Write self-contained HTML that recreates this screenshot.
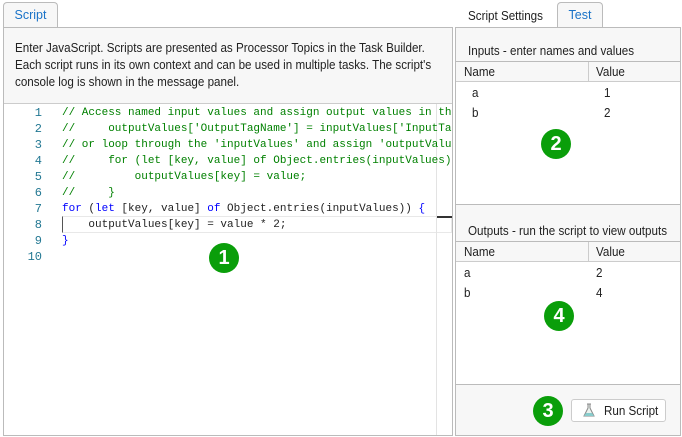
<!DOCTYPE html>
<html><head><style>
*{box-sizing:border-box;margin:0;padding:0}
body{width:682px;height:437px;background:#fff;font-family:"Liberation Sans",sans-serif;font-size:12px;color:#222;position:relative;overflow:hidden}
.a{position:absolute}
.tab{position:absolute;border:1px solid #bbb;border-bottom:none;border-radius:4px 4px 0 0;background:#f7f7f7;color:#1a73c8;font-size:12.5px;text-align:center;line-height:24px}
.code{font-family:"Liberation Mono",monospace;font-size:11px;line-height:16px;white-space:pre}
.c{color:#008000}.k{color:#0000ff}
.ln{position:absolute;left:0;width:38px;text-align:right;color:#237893;font-size:12px}
.circ{position:absolute;width:30px;height:30px;border-radius:50%;background:#0a9e0a;color:#fff;font-size:20px;font-weight:bold;line-height:30px;text-align:center}
.hd{position:absolute;font-size:12.5px;white-space:nowrap;transform:scaleX(.93);transform-origin:left top}
.desc div{white-space:nowrap;font-size:12.5px;line-height:17px;transform:scaleX(.93);transform-origin:left top}
</style></head><body>
<div class="tab" style="left:3px;top:2px;width:55px;height:26px;background:#f7f7f7">Script</div>
<div class="a" style="left:3px;top:27px;width:450px;height:409px;border:1px solid #bbb;background:#f7f7f7"></div>
<div class="a desc" style="left:15px;top:40px;color:#222">
<div>Enter JavaScript. Scripts are presented as Processor Topics in the Task Builder.</div>
<div>Each script runs in its own context and can be used in multiple tasks. The script's</div>
<div>console log is shown in the message panel.</div></div>
<div class="a" style="left:4px;top:103px;width:448px;height:332px;background:#fff;border-top:1px solid #ccc;overflow:hidden">
<div class="a" style="left:58px;top:112px;width:390px;height:17px;border:1px solid #e8e8e8;border-left:1px solid #555"></div>
<div class="a" style="left:432px;top:112px;width:16px;height:2px;background:#333"></div>
<div class="a" style="left:432px;top:0;width:1px;height:332px;background:#e3e3e3"></div>
<div class="a code" style="left:0;top:1px;width:100%">
<div class="ln" style="top:0">1</div><div class="ln" style="top:16px">2</div><div class="ln" style="top:32px">3</div><div class="ln" style="top:48px">4</div><div class="ln" style="top:64px">5</div><div class="ln" style="top:80px">6</div><div class="ln" style="top:96px">7</div><div class="ln" style="top:112px">8</div><div class="ln" style="top:128px">9</div><div class="ln" style="top:144px">10</div>
<div class="a" style="left:58px;top:0"><span class="c">// Access named input values and assign output values in th</span>
<span class="c">//     outputValues['OutputTagName'] = inputValues['InputTa</span>
<span class="c">// or loop through the 'inputValues' and assign 'outputValu</span>
<span class="c">//     for (let [key, value] of Object.entries(inputValues)</span>
<span class="c">//         outputValues[key] = value;</span>
<span class="c">//     }</span>
<span class="k">for</span> (<span class="k">let</span> [key, value] <span class="k">of</span> Object.entries(inputValues)) <span class="k">{</span>
    outputValues[key] = value * 2;
<span class="k">}</span>
</div></div>
</div>
<div class="circ" style="left:209px;top:243px">1</div>

<div class="hd" style="left:468px;top:9px">Script Settings</div>
<div class="tab" style="left:557px;top:2px;width:46px;height:26px">Test</div>
<div class="a" style="left:455px;top:27px;width:226px;height:409px;border:1px solid #bbb;background:#f7f7f7"></div>
<div class="hd" style="left:468px;top:44px">Inputs - enter names and values</div>
<div class="a" style="left:456px;top:61px;width:224px;height:144px;background:#fff;border-top:1px solid #bbb;border-bottom:1px solid #bbb"></div>
<div class="a" style="left:456px;top:62px;width:224px;height:20px;background:#f7f7f7;border-bottom:1px solid #ccc"></div>
<div class="a" style="left:588px;top:62px;width:1px;height:20px;background:#ccc"></div>
<div class="hd" style="left:464px;top:65px">Name</div><div class="hd" style="left:596px;top:65px">Value</div>
<div class="hd" style="left:472px;top:86px">a</div><div class="hd" style="left:604px;top:86px">1</div>
<div class="hd" style="left:472px;top:106px">b</div><div class="hd" style="left:604px;top:106px">2</div>
<div class="circ" style="left:541px;top:129px">2</div>

<div class="hd" style="left:468px;top:224px">Outputs - run the script to view outputs</div>
<div class="a" style="left:456px;top:241px;width:224px;height:144px;background:#fff;border-top:1px solid #bbb;border-bottom:1px solid #bbb"></div>
<div class="a" style="left:456px;top:242px;width:224px;height:20px;background:#f7f7f7;border-bottom:1px solid #ccc"></div>
<div class="a" style="left:588px;top:242px;width:1px;height:20px;background:#ccc"></div>
<div class="hd" style="left:464px;top:245px">Name</div><div class="hd" style="left:596px;top:245px">Value</div>
<div class="hd" style="left:464px;top:266px">a</div><div class="hd" style="left:596px;top:266px">2</div>
<div class="hd" style="left:464px;top:286px">b</div><div class="hd" style="left:596px;top:286px">4</div>
<div class="circ" style="left:544px;top:301px">4</div>

<div class="a" style="left:571px;top:399px;width:95px;height:23px;border:1px solid #ccc;border-radius:3px;background:#fff"></div>
<svg class="a" style="left:583px;top:403px" width="12" height="15" viewBox="0 0 12 15"><path d="M4 1h4M5 1v4L1 13h10L7 5V1" fill="#eaf2ee" stroke="#888" stroke-width="1"/><path d="M3 10h6l2 3H1z" fill="#8cc"/></svg>
<div class="hd" style="left:604px;top:404px">Run Script</div>
<div class="circ" style="left:533px;top:396px">3</div>
</body></html>
